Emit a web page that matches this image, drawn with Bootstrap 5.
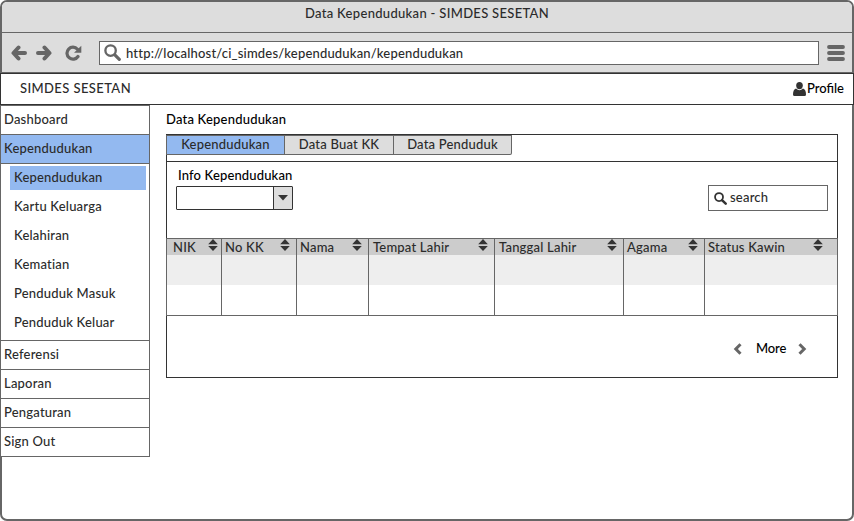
<!DOCTYPE html>
<html lang="id">
<head>
<meta charset="utf-8">
<meta name="viewport" content="width=device-width, initial-scale=1">
<title>Data Kependudukan - SIMDES SESETAN</title>
<link href="https://cdn.jsdelivr.net/npm/bootstrap@5.3.0/dist/css/bootstrap.min.css" rel="stylesheet">
<style>
  body { font: 500 13px/18px Lato, "Open Sans", sans-serif; letter-spacing: .2px; color: #2b2b2b; background: #fff; }
  a { color: inherit; text-decoration: none; }
  .window { height: 521px; border: 2px solid #666; border-radius: 7px; }
  .titlebar { height: 31px; background: #ddd; border-bottom: 1px solid #666; border-radius: 5px 5px 0 0; padding-bottom: 8px; letter-spacing: .31px; }
  .toolbar { height: 40px; background: #ddd; border-bottom: 1px solid #666; padding: 0 7px 0 9px; color: #666; }
  .icon-next { margin-left: 9px; }
  .icon-reload { margin-left: 13px; }
  .address { height: 24px; border: 1px solid #666; background: #fff; color: #2b2b2b; padding-left: 4px; margin: 0 8px 0 17px; }
  .url-text { margin-left: 5px; letter-spacing: .18px; }
  .lens-gray { color: #666; margin-top: -1px; }
  .lens-dark { color: #333; }
  .site-head { height: 32px; margin: 0 -2px; border: 1px solid #333; background: #fff; padding: 0 9px 2px 19px; }
  .brand-text { letter-spacing: .4px; }
  .profile-icon { margin-top: 2px; }
  .profile-text { letter-spacing: 0; margin-left: 1px; }
  .side { width: 150px; margin-left: -2px; border: 1px solid #666; background: #fff; }
  .side-link { display: block; height: 29px; padding: 4px 0 0 3px; border-bottom: 1px solid #666; }
  .side > .side-link:last-child { border-bottom: 0; height: 28px; }
  .side-link.current, .sub-link.current { background: #93b9f0; }
  .sub { height: 177px; border-bottom: 1px solid #666; padding: 2px 3px 0 9px; }
  .sub-link { height: 24px; margin-bottom: 5px; padding: 2px 0 0 4px; display: block; }
  .main { width: 672px; margin-left: 16px; }
  .page-title { height: 29px; padding-top: 5px; color: #000; }
  .panel { height: 244px; border: 1px solid #333; }
  .tabs { height: 27px; border-bottom: 1px solid #333; margin-left: -1px; }
  .tab-link { height: 20px; background: #ddd; border: 1px solid #666; border-left-width: 0; text-align: center; line-height: 17px; }
  .tab-link:first-child { border-left-width: 1px; background: #93b9f0; width: 119px; }
  .tab-link:nth-child(2) { width: 109px; }
  .tab-link:nth-child(3) { width: 118px; border-radius: 0 0 2px 0; }
  .filters { height: 76px; padding: 5px 9px 0; }
  .info { color: #000; padding-left: 2px; height: 15px; line-height: 16px; overflow: hidden; margin-bottom: 4px; letter-spacing: .15px; }
  .picker { width: 117px; height: 24px; border: 1px solid #333; border-radius: 1px; }
  .picker-btn { width: 19px; background: #ddd; border-left: 1px solid #333; }
  .finder { width: 120px; height: 26px; border: 1px solid #666; margin-top: 18px; padding-left: 5px; }
  .finder-text { margin-left: 3px; padding-bottom: 2px; }
  .grid-table { width: 672px; height: 78px; margin-left: -1px; border: 1px solid #666; border-width: 1px 0; }
  .grid-col { border-left: 1px solid #666; height: 76px; }
  .grid-col:last-child { border-right: 1px solid #666; }
  .col-head { height: 16px; line-height: 17px; background: #ccc; padding: 0 6px 0 3px; }
  .col-cell { height: 30px; }
  .col-cell.shade { background: #eee; }
  .w-nik { width: 55px; }
  .w-nik .col-head { padding: 0 3px 0 6px; }
  .w-kk { width: 75px; }
  .w-nama { width: 72px; }
  .w-tempat { width: 126px; }
  .w-tanggal { width: 129px; }
  .w-tempat .col-head, .w-tanggal .col-head { padding-left: 4px; }
  .w-agama { width: 81px; }
  .w-status { width: 134px; }
  .w-status .col-head { padding-right: 14px; }
  .pager { height: 61px; padding: 4px 30px 0 0; color: #000; }
  .more-text { margin: 0 11px 0 13px; padding-bottom: 1px; letter-spacing: -.1px; width: 32px; padding-left: 1px; }
</style>
</head>
<body>
<svg width="0" height="0" class="position-absolute">
  <symbol id="sort" viewBox="0 0 10 12"><path d="M5 0 9.800 5.200H.2zM.2 7h9.600L5 12z" fill="#333"/></symbol>
  <symbol id="lens" viewBox="0 0 16 16"><circle cx="6.200" cy="6.200" r="4.900" fill="none" stroke="currentColor" stroke-width="2.200"/><path d="m10.200 10.200 4.200 4.200" stroke="currentColor" stroke-width="3" stroke-linecap="round"/></symbol>
</svg>
<div class="window d-flex flex-column">
  <div class="titlebar d-flex align-items-center justify-content-center">Data Kependudukan - SIMDES SESETAN</div>
  <div class="toolbar d-flex align-items-center">
    <svg width="16" height="16" viewBox="0 0 16 16" fill="none" stroke="currentColor" stroke-width="4" stroke-linecap="round" stroke-linejoin="round"><path d="M7.500 2.500 2.500 8l5 5.500M3 8h11"/></svg>
    <svg class="icon-next" width="16" height="16" viewBox="0 0 16 16" fill="none" stroke="currentColor" stroke-width="4" stroke-linecap="round" stroke-linejoin="round"><path d="M8.500 2.500 13.500 8l-5 5.500M13 8H2"/></svg>
    <svg class="icon-reload" width="17" height="16" viewBox="0 0 17 16"><path d="M12.500 4.200A6 6 0 1 0 13 11.500" fill="none" stroke="currentColor" stroke-width="3.200" stroke-linecap="round"/><path d="M16.300.8v7H9z" fill="currentColor"/></svg>
    <div class="address flex-grow-1 d-flex align-items-center">
      <svg class="lens-gray" width="17" height="17"><use href="#lens"/></svg>
      <span class="url-text">http://localhost/ci_simdes/kependudukan/kependudukan</span>
    </div>
    <svg width="18" height="16" viewBox="0 0 18 16" stroke="currentColor" stroke-width="3.800" stroke-linecap="round"><path d="M2 2h14M2 8h14M2 14h14"/></svg>
  </div>
  <header class="site-head d-flex align-items-center justify-content-between">
    <span class="brand-text">SIMDES SESETAN</span>
    <a href="#" class="d-flex align-items-center text-black"><svg class="profile-icon" width="13" height="14" viewBox="0 0 13 14" fill="#333"><ellipse cx="6.500" cy="3.600" rx="3.300" ry="3.600"/><path d="M3 6.500Q0 7.500 0 12.500 0 14 1.500 14h10q1.500 0 1.500-1.500 0-5-3-6-3.500 3.500-7 0z"/></svg><span class="profile-text">Profile</span></a>
  </header>
  <div class="d-flex align-items-start">
    <nav class="side">
      <a href="#" class="side-link">Dashboard</a>
      <a href="#" class="side-link current">Kependudukan</a>
      <div class="sub">
        <a href="#" class="sub-link current">Kependudukan</a>
        <a href="#" class="sub-link">Kartu Keluarga</a>
        <a href="#" class="sub-link">Kelahiran</a>
        <a href="#" class="sub-link">Kematian</a>
        <a href="#" class="sub-link">Penduduk Masuk</a>
        <a href="#" class="sub-link">Penduduk Keluar</a>
      </div>
      <a href="#" class="side-link">Referensi</a>
      <a href="#" class="side-link">Laporan</a>
      <a href="#" class="side-link">Pengaturan</a>
      <a href="#" class="side-link">Sign Out</a>
    </nav>
    <main class="main">
      <div class="page-title">Data Kependudukan</div>
      <section class="panel">
        <div class="tabs d-flex">
          <a href="#" class="tab-link">Kependudukan</a>
          <a href="#" class="tab-link">Data Buat KK</a>
          <a href="#" class="tab-link">Data Penduduk</a>
        </div>
        <div class="filters d-flex justify-content-between align-items-start">
          <div>
            <div class="info">Info Kependudukan</div>
            <div class="picker d-flex justify-content-end">
              <div class="picker-btn d-flex align-items-center justify-content-center"><svg width="10" height="6" viewBox="0 0 10 6"><path d="M0 0h10L5 5.500z" fill="#333"/></svg></div>
            </div>
          </div>
          <div class="finder d-flex align-items-center"><svg class="lens-dark" width="13" height="13"><use href="#lens"/></svg><span class="finder-text">search</span></div>
        </div>
        <div class="grid-table d-flex">
          <div class="grid-col w-nik"><div class="col-head d-flex justify-content-between"><span>NIK</span><svg width="10" height="12"><use href="#sort"/></svg></div><div class="col-cell shade"></div><div class="col-cell"></div></div>
          <div class="grid-col w-kk"><div class="col-head d-flex justify-content-between"><span>No KK</span><svg width="10" height="12"><use href="#sort"/></svg></div><div class="col-cell shade"></div><div class="col-cell"></div></div>
          <div class="grid-col w-nama"><div class="col-head d-flex justify-content-between"><span>Nama</span><svg width="10" height="12"><use href="#sort"/></svg></div><div class="col-cell shade"></div><div class="col-cell"></div></div>
          <div class="grid-col w-tempat"><div class="col-head d-flex justify-content-between"><span>Tempat Lahir</span><svg width="10" height="12"><use href="#sort"/></svg></div><div class="col-cell shade"></div><div class="col-cell"></div></div>
          <div class="grid-col w-tanggal"><div class="col-head d-flex justify-content-between"><span>Tanggal Lahir</span><svg width="10" height="12"><use href="#sort"/></svg></div><div class="col-cell shade"></div><div class="col-cell"></div></div>
          <div class="grid-col w-agama"><div class="col-head d-flex justify-content-between"><span>Agama</span><svg width="10" height="12"><use href="#sort"/></svg></div><div class="col-cell shade"></div><div class="col-cell"></div></div>
          <div class="grid-col w-status"><div class="col-head d-flex justify-content-between"><span>Status Kawin</span><svg width="10" height="12"><use href="#sort"/></svg></div><div class="col-cell shade"></div><div class="col-cell"></div></div>
        </div>
        <div class="pager d-flex align-items-center justify-content-end">
          <svg width="9" height="12" viewBox="0 0 9 12" fill="none" stroke="#666" stroke-width="3"><path d="M7.500 1.200 2.800 6l4.700 4.800"/></svg>
          <span class="more-text">More</span>
          <svg width="9" height="12" viewBox="0 0 9 12" fill="none" stroke="#666" stroke-width="3"><path d="M1.500 1.200 6.200 6l-4.700 4.800"/></svg>
        </div>
      </section>
    </main>
  </div>
</div>
<script src="https://cdn.jsdelivr.net/npm/bootstrap@5.3.0/dist/js/bootstrap.bundle.min.js"></script>
</body>
</html>
